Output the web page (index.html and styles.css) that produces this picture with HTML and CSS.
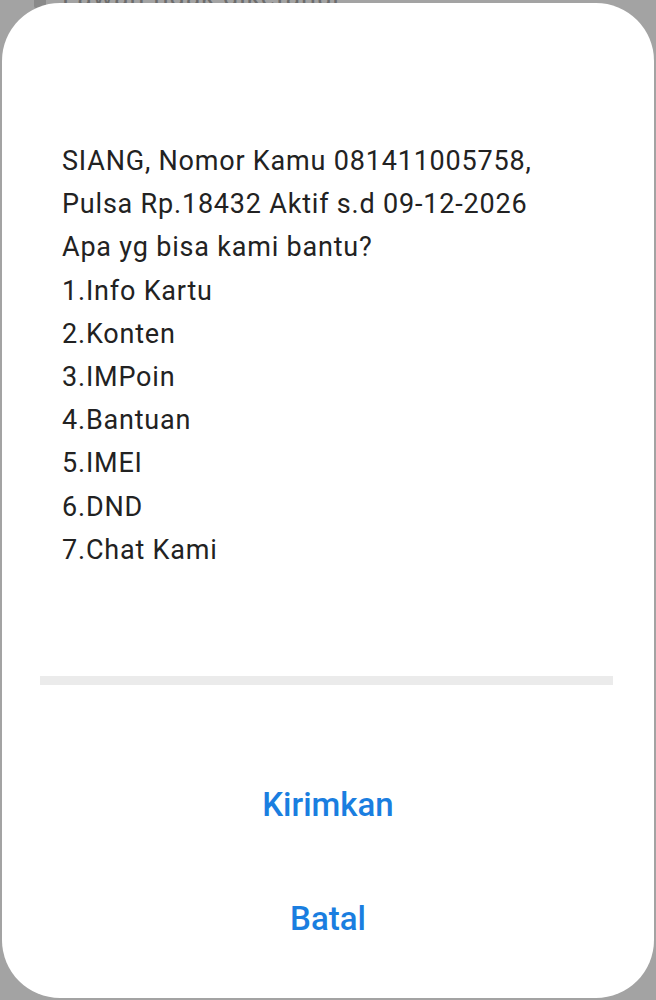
FILE: index.html
```html
<!DOCTYPE html>
<html lang="id">
<head>
<meta charset="utf-8">
<link rel="stylesheet" href="styles.css">
</head>
<body>
<div class="backdrop">
  <div class="behind"><span class="behind-icon"></span><span class="behind-text">Lawan tidak diketahui</span></div>
</div>
<div class="dialog">
  <div class="message">
    <p>SIANG, Nomor Kamu 081411005758,</p>
    <p>Pulsa Rp.18432 Aktif s.d 09-12-2026</p>
    <p>Apa yg bisa kami bantu?</p>
    <p>1.Info Kartu</p>
    <p>2.Konten</p>
    <p>3.IMPoin</p>
    <p>4.Bantuan</p>
    <p>5.IMEI</p>
    <p>6.DND</p>
    <p>7.Chat Kami</p>
  </div>
  <div class="input-line"></div>
  <div class="actions">
    <button class="action">Kirimkan</button>
    <button class="action">Batal</button>
  </div>
</div>
</body>
</html>
```
FILE: styles.css
```css
html, body {
  margin: 0;
  padding: 0;
}
body {
  width: 656px;
  height: 1000px;
  background: #a3a3a3;
  font-family: Roboto, "Noto Sans", sans-serif;
  overflow: hidden;
  position: relative;
}
.backdrop {
  position: absolute;
  left: 0;
  top: 0;
  width: 656px;
  height: 1000px;
}
.behind {
  position: absolute;
  left: 34px;
  top: -19px;
  display: flex;
  align-items: center;
  gap: 16px;
}
.behind-icon {
  width: 12px;
  height: 22px;
  background: #8a8a8a;
  border-radius: 2px;
}
.behind-text {
  font-size: 27px;
  letter-spacing: 0.8px;
  color: #6c6c6c;
}
.dialog {
  position: relative;
  margin: 3px 2px 0 2px;
  height: 995px;
  background: #ffffff;
  border-radius: 58px;
  display: flex;
  flex-direction: column;
  box-sizing: border-box;
  padding-top: 137px;
}
.message {
  padding: 0 30px 0 60px;
  color: #222222;
  font-size: 27px;
  letter-spacing: 0.8px;
  line-height: 43.2px;
}
.message p {
  margin: 0;
}
.input-line {
  margin: 104px 41px 0 38px;
  height: 9px;
  background: #ebebeb;
}
.actions {
  display: flex;
  flex-direction: column;
  align-items: center;
  margin-top: 90px;
  gap: 54px;
}
.action {
  border: 0;
  background: transparent;
  padding: 0;
  font-family: Roboto, "Noto Sans", sans-serif;
  font-size: 33px;
  font-weight: 500;
  color: #1a7ee0;
  line-height: 60px;
  margin-left: 0;
}
```
